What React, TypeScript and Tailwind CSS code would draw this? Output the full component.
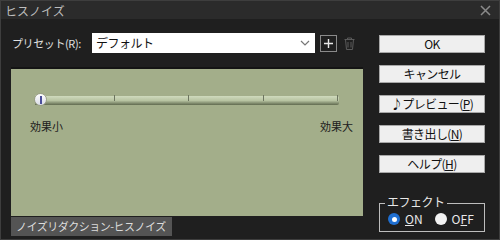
const font = { fontFamily: '"Noto Sans CJK JP", "Noto Sans", sans-serif' };

function SideButton({ children }: { children: React.ReactNode }) {
  return (
    <button className="flex h-[18px] w-[106px] items-center justify-center border border-[#a8a8a8] bg-[#efefef] text-[12px] leading-none tracking-[-0.6px] text-[#111]">
      {children}
    </button>
  );
}

function Slider() {
  const ticks = [79, 153, 228, 302];
  return (
    <div className="relative mx-[24px] mt-[25px] h-[12px] w-[304px]">
      <div className="absolute left-0 right-0 top-[2px] h-[9px] rounded-r-[2px] bg-gradient-to-b from-[#cfdabd] via-[#b8c4a2] to-[#616b50]" />
      {ticks.map((x) => (
        <div key={x} className="absolute top-[1px] h-[6px] w-[1px] bg-[#6d7560]" style={{ left: x }} />
      ))}
      <div className="absolute left-[-1px] top-[-1px] flex h-[13px] w-[13px] items-center justify-center rounded-full border border-[#9aa088] bg-gradient-to-b from-white to-[#d9dce6]">
        <div className="h-[8px] w-[2px] bg-[#4b4f9a]" />
      </div>
    </div>
  );
}

function Radio({ on, label }: { on: boolean; label: React.ReactNode }) {
  return (
    <div className="flex items-center gap-[5px]">
      {on ? (
        <div className="flex h-[12px] w-[12px] items-center justify-center rounded-full bg-[#1f6fd1]">
          <div className="h-[5px] w-[5px] rounded-full bg-white" />
        </div>
      ) : (
        <div className="h-[12px] w-[12px] rounded-full bg-[#f2f2f2]" />
      )}
      <span className="text-[12px] leading-none text-[#e8e8e8]">{label}</span>
    </div>
  );
}

export default function App() {
  return (
    <div style={font} className="flex h-[240px] w-[500px] flex-col border border-[#3e3e3e] bg-[#1f1f1f]">
      <div className="flex h-[18px] items-center justify-between bg-[#2b2b2b] pl-[4px] pr-[8px]">
        <span className="pt-[1px] text-[12px] leading-none text-[#bdbdbd]">ヒスノイズ</span>
        <svg width="11" height="11" viewBox="0 0 11 11" stroke="#8a8a8a" strokeWidth="1.5">
          <path d="M1 1L10 10M10 1L1 10" />
        </svg>
      </div>
      <div className="flex flex-1 pl-[10px]">
        <div className="flex w-[352px] flex-col">
          <div className="mt-[14px] flex h-[20px] items-center">
            <span className="w-[81px] pl-[1px] text-[11px] leading-none tracking-[-0.4px] text-[#e0e0e0]">プリセット(R):</span>
            <div className="flex h-[20px] w-[223px] items-center justify-between bg-white pl-[4px] pr-[5px]">
              <span className="text-[12px] leading-none tracking-[-0.5px] text-[#111]">デフォルト</span>
              <svg width="10" height="6" viewBox="0 0 10 6" fill="none" stroke="#777" strokeWidth="1.2">
                <path d="M1 1L5 5L9 1" />
              </svg>
            </div>
            <div className="ml-[5px] flex h-[17px] w-[17px] items-center justify-center border border-[#8a8a8a]">
              <svg width="11" height="11" viewBox="0 0 11 11" stroke="#e8e8e8" strokeWidth="1.4">
                <path d="M5.5 1V10M1 5.5H10" />
              </svg>
            </div>
            <svg className="ml-[7px]" width="11" height="13" viewBox="0 0 11 13" fill="none" stroke="#5a5a5a" strokeWidth="1">
              <path d="M0.5 2.5H10.5M3.5 2.5V1H7.5V2.5M1.5 2.5L2.5 12.5H8.5L9.5 2.5M4 5V10.5M7 5V10.5" />
            </svg>
          </div>
          <div className="mt-[14px] flex h-[149px] flex-col border-t-2 border-[#141414] bg-[#a3ae8a]">
            <Slider />
            <div className="mx-[19px] mt-[15px] flex justify-between text-[11px] leading-none text-[#1c1c1c]">
              <span>効果小</span>
              <span className="mr-[-9px]">効果大</span>
            </div>
          </div>
          <div className="mt-[1px] flex h-[19px] w-[161px] items-center bg-[#545454] pl-[5px]">
            <span className="whitespace-nowrap text-[11px] leading-none tracking-[-0.5px] text-[#dcdcdc]">ノイズリダクション-ヒスノイズ</span>
          </div>
        </div>
        <div className="ml-[16px] flex flex-col">
          <div className="mt-[16px] flex flex-col gap-[12px]">
            <SideButton>OK</SideButton>
            <SideButton>キャンセル</SideButton>
            <SideButton>
              ♪プレビュー(<span className="underline">P</span>)
            </SideButton>
            <SideButton>
              書き出し(<span className="underline">N</span>)
            </SideButton>
            <SideButton>
              ヘルプ(<span className="underline">H</span>)
            </SideButton>
          </div>
          <div className="relative mt-[30px] h-[29px] w-[106px] border border-[#bdbdbd]">
            <span className="absolute left-[5px] top-[-8px] bg-[#1f1f1f] px-[2px] text-[12px] leading-none tracking-[-0.5px] text-[#e8e8e8]">エフェクト</span>
            <div className="mt-[9px] flex gap-[12px] pl-[8px]">
              <Radio on label={<><span className="underline">O</span>N</>} />
              <Radio on={false} label={<>O<span className="underline">F</span>F</>} />
            </div>
          </div>
        </div>
      </div>
    </div>
  );
}
